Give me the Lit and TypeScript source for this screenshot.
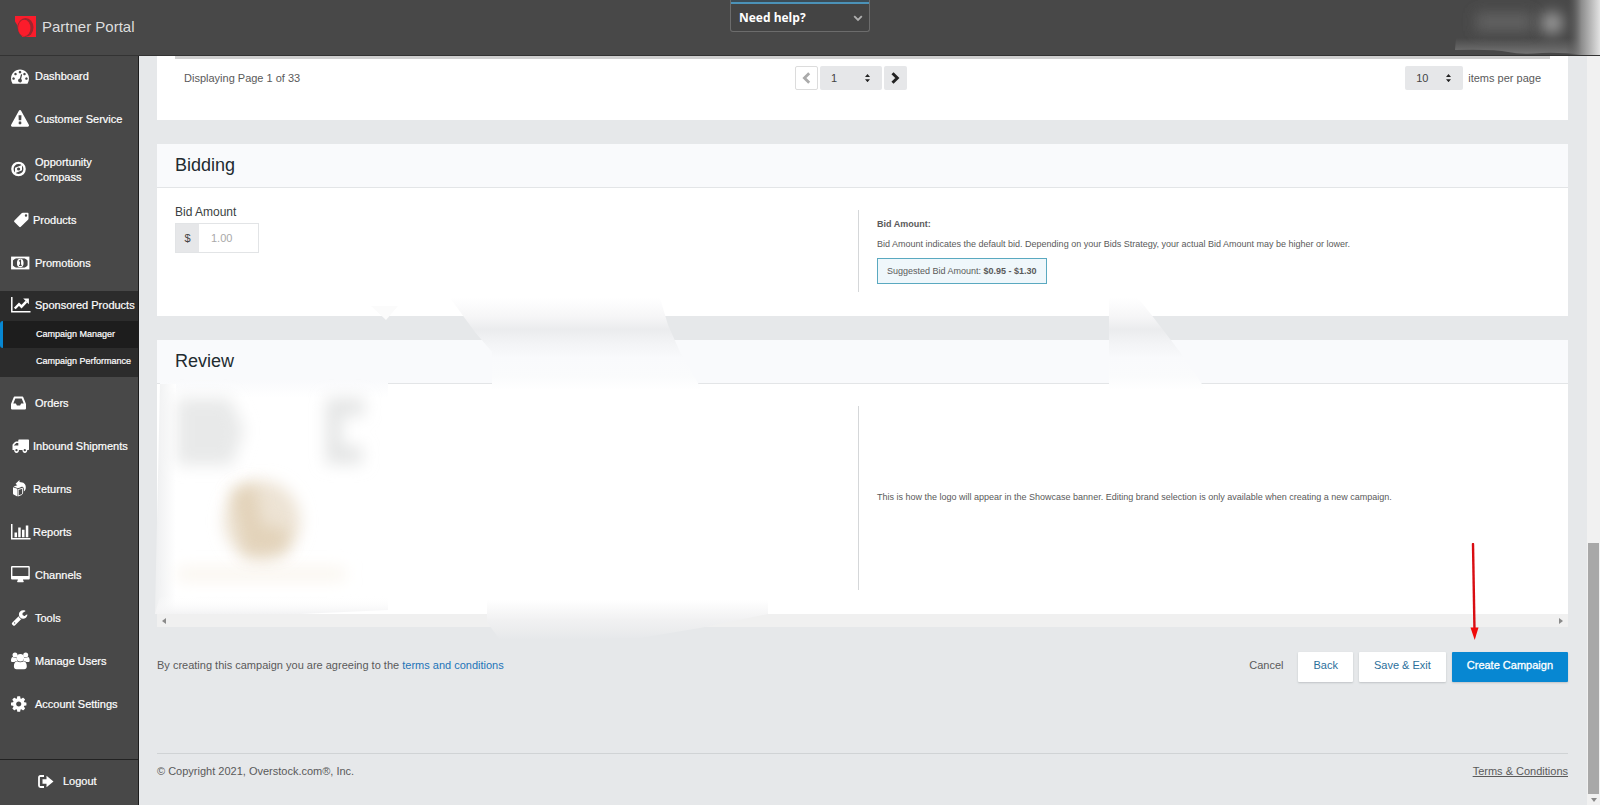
import { LitElement, html, svg, css, nothing } from "lit";
import { customElement, property } from "lit/decorators.js";
import { classMap } from "lit/directives/class-map.js";

const icons: Record<string, unknown> = {
  dashboard: svg`<svg width="18" height="18" viewBox="0 0 1792 1792" fill="currentColor"><path d="M384 1152q0-53-37.500-90.500t-90.500-37.500-90.500 37.500-37.500 90.500 37.500 90.500 90.500 37.500 90.500-37.500 37.500-90.500zm192-448q0-53-37.500-90.500t-90.500-37.500-90.500 37.500-37.500 90.500 37.500 90.500 90.500 37.500 90.500-37.500 37.500-90.500zm428 481l101-382q6-26-7.500-48.500t-38.500-29.500-48 6.500-30 39.500l-101 382q-60 5-107 43.500t-63 98.500q-20 77 20 146t117 89 146-20 89-117q16-60-6-117t-72-91zm660-33q0-53-37.500-90.500t-90.500-37.500-90.500 37.500-37.500 90.500 37.500 90.500 90.500 37.500 90.500-37.500 37.500-90.500zm-640-640q0-53-37.500-90.500t-90.500-37.500-90.500 37.500-37.500 90.500 37.500 90.500 90.500 37.500 90.500-37.500 37.500-90.500zm448 192q0-53-37.500-90.500t-90.500-37.500-90.500 37.500-37.500 90.500 37.500 90.500 90.500 37.500 90.500-37.500 37.500-90.500zm320 448q0 261-141 483-19 29-54 29h-1402q-35 0-54-29-141-221-141-483 0-182 71-348t191-286 286-191 348-71 348 71 286 191 191 286 71 348z"/></svg>`,
  warning: svg`<svg width="18" height="18" viewBox="0 0 1792 1792" fill="currentColor"><path d="M1024 1375v-190q0-14-9.500-23.500t-22.500-9.500h-192q-13 0-22.500 9.500t-9.500 23.500v190q0 14 9.500 23.500t22.500 9.500h192q13 0 22.500-9.500t9.500-23.500zm-2-374l18-459q0-12-10-19-13-11-24-11h-220q-11 0-24 11-10 7-10 21l17 457q0 10 10 16.500t24 6.500h185q14 0 23.500-6.500t10.500-16.500zm-14-934l768 1408q35 63-2 126-17 29-46.500 46t-63.500 17h-1536q-34 0-63.500-17t-46.500-46q-37-63-2-126l768-1408q17-31 47-49t65-18 65 18 47 49z"/></svg>`,
  compass: svg`<svg width="15" height="16" viewBox="0 0 15 16"><circle cx="7.500" cy="8" r="6.100" fill="none" stroke="currentColor" stroke-width="2.400"/><path fill="currentColor" fill-rule="evenodd" d="M11 3.900v5.400L4 12.200V6.800zM7.600 6.400a1.600 1.600 0 1 0 0 3.200 1.600 1.600 0 0 0 0-3.200z"/></svg>`,
  tag: svg`<svg width="19" height="16" viewBox="0 0 19 16" fill="currentColor"><path fill-rule="evenodd" d="M17.500 1.400v5.100c0 .5-.2.900-.5 1.200l-7.200 7.100c-.5.500-1.100.5-1.600 0L3.400 10c-.5-.5-.5-1.100 0-1.600l7.200-7.100c.3-.3.700-.5 1.200-.5h5c.4 0 .7.300.7.600zM15 2.300a1.200 1.200 0 1 0 0 2.400 1.200 1.200 0 0 0 0-2.400z"/></svg>`,
  money: svg`<svg width="19" height="14" viewBox="0 0 19 14"><rect x="1" y="1.500" width="16.500" height="11" fill="none" stroke="currentColor" stroke-width="1.800"/><path fill="currentColor" d="M1.500 2h3.500L1.500 4.800zM17 2h-3.500L17 4.800zM1.500 12h3.500L1.500 9.200zM17 12h-3.500L17 9.200z"/><ellipse cx="9.250" cy="7" rx="3.300" ry="4.300" fill="currentColor"/><path d="M8 5.300l1.500-1V9M8 9.400h2.700" fill="none" stroke="#484848" stroke-width="1.100"/></svg>`,
  line: svg`<svg width="20" height="16" viewBox="0 0 20 16"><path d="M.8 0v14.800H19.500" fill="none" stroke="currentColor" stroke-width="1.500"/><path d="M3.800 11.500l4.200-4.300 2.500 2.500 4.800-5" fill="none" stroke="currentColor" stroke-width="2.500"/><path fill="currentColor" d="M12.200 1.500h5.700v5.700z"/></svg>`,
  inbox: svg`<svg width="15" height="14" viewBox="0 0 15 14" fill="currentColor"><path fill-rule="evenodd" d="M2.600 1.400C2.800.8 3.100.6 3.600.6h7.800c.5 0 .8.200 1 .8L15 8v4.600c0 .5-.3.800-.8.800H.8c-.5 0-.8-.3-.8-.8V8zM4.300 2.500L2.300 7.600h2.600l1 2h3.200l1-2h2.600l-2-5.100z"/></svg>`,
  truck: svg`<svg width="19" height="16" viewBox="0 0 19 16" fill="currentColor"><path fill-rule="evenodd" d="M8 1.500h9.300c.4 0 .7.300.7.700v9c0 .6-.4.900-1 .9h-.8a2.400 2.400 0 1 1-4.700 0H7.900a2.400 2.400 0 1 1-4.700 0H1.500V7.200c0-.5.200-.9.500-1.200l2-2c.3-.3.700-.5 1.100-.5h2.200V2.200c0-.4.300-.7.700-.7zM5.300 4.900L3 7.200v.4h4.300V4.900zM5.500 11a1.100 1.100 0 1 0 0 2.300 1.100 1.100 0 0 0 0-2.300zM13.800 11a1.100 1.100 0 1 0 0 2.300 1.100 1.100 0 0 0 0-2.300z"/></svg>`,
  returns: svg`<svg width="17" height="17" viewBox="0 0 17 17" fill="currentColor"><path d="M2 7.300l4.400 1.500v7.600L3 14.800c-.7-.3-1-.7-1-1.400z"/><path d="M11.600 8.200v5c0 .6-.3 1-.8 1.300l-3.600 1.500V9.600z" fill="none" stroke="currentColor" stroke-width=".9"/><path d="M2.600 6.500L7 5l4.600 1.600-4.700 1.600z"/><path d="M8.500 0v2.100c4.200.1 6.300 2.100 6.300 5.100 0 2-.6 3.300-2 4.400 .6-3.500-.2-5.300-4.300-5.600v1.400L4.600 3.700z"/></svg>`,
  bars: svg`<svg width="20" height="16" viewBox="0 0 20 16" fill="currentColor"><path d="M0 0h1.500v14h18v1.500H0zM3.500 8.500h2.500v4.700H3.500zM7.200 3.500h2.500v9.700H7.200zM11 5.700h2.500v7.500H11zM14.800 1.500h2.500v11.700h-2.500z"/></svg>`,
  desktop: svg`<svg width="19" height="17" viewBox="0 0 19 17" fill="currentColor"><path fill-rule="evenodd" d="M1.400 0h16.100c.8 0 1.300.5 1.300 1.300v10.900c0 .8-.5 1.300-1.300 1.300H12c0 1.100.8 1.400.8 2.100 0 .4-.2.600-.6.600H6.700c-.4 0-.6-.2-.6-.6 0-.7.800-1 .8-2.100H1.400C.6 13.500 0 13 0 12.200V1.300C0 .5.600 0 1.400 0zm0 1.400v8.500h16V1.400z"/></svg>`,
  wrench: svg`<svg width="17" height="17" viewBox="0 0 1792 1792" fill="currentColor"><path d="M448 1472q0-26-19-45t-45-19-45 19-19 45 19 45 45 19 45-19 19-45zm644-420l-682 682q-37 37-90 37-52 0-91-37l-106-108q-38-36-38-90 0-53 38-91l681-681q39 98 114.500 173.500t173.500 114.500zm634-435q0 39-23 106-47 134-164.500 217.500t-258.500 83.500q-185 0-316.500-131.500t-131.500-316.500 131.500-316.500 316.500-131.500q58 0 121.500 16.500t107.500 46.500q16 11 16 28t-16 28l-293 169v224l193 107q5-3 79-48.500t135.500-81 70.500-35.500q15 0 23.500 10t8.500 25z"/></svg>`,
  users: svg`<svg width="19" height="18" viewBox="0 0 19 18" fill="currentColor"><circle cx="4" cy="2.900" r="2.500"/><circle cx="14.700" cy="2.900" r="2.500"/><path d="M1.500 5.100c1.500 1 3.300 1 4.300.4-.2 1.500.1 2.500.7 3.400-1.600 0-2.500.4-3.200 1.200H1.700C.5 10.100 0 9.600 0 8.700c0-1.600.4-3.100 1.500-3.600zM17.200 5.100c-1.500 1-3.300 1-4.300.4.200 1.500-.1 2.500-.7 3.400 1.600 0 2.500.4 3.200 1.200H17c1.200 0 1.700-.5 1.700-1.400 0-1.600-.4-3.100-1.500-3.600z"/><circle cx="9.350" cy="5.800" r="3.700"/><path d="M6 9.200c2.200 1.500 4.500 1.500 6.700 0 2.200.3 3.100 2.500 3.100 5.400 0 1.600-1 2.600-2.600 2.600H5.500c-1.600 0-2.600-1-2.600-2.600 0-2.900.9-5.100 3.100-5.400z"/></svg>`,
  cog: svg`<svg width="18" height="18" viewBox="128 0 1792 1792" fill="currentColor"><path d="M1152 896q0-106-75-181t-181-75-181 75-75 181 75 181 181 75 181-75 75-181zm512-109v222q0 12-8 23t-20 13l-185 28q-19 54-39 91 35 50 107 138 10 12 10 25t-9 23q-27 37-99 108t-94 71q-12 0-26-9l-138-108q-44 23-91 38-16 136-29 186-7 28-36 28h-222q-14 0-24.500-8.500t-11.500-21.500l-28-184q-49-16-90-37l-141 107q-10 9-25 9-14 0-25-11-126-114-165-168-7-10-7-23 0-12 8-23 15-21 51-66.500t54-70.500q-27-50-41-99l-183-27q-13-2-21-12.500t-8-23.500v-222q0-12 8-23t19-13l186-28q14-46 39-92-40-57-107-138-10-12-10-24 0-10 9-23 26-36 98.500-107.500t94.500-71.500q13 0 26 10l138 107q44-23 91-38 16-136 29-186 7-28 36-28h222q14 0 24.500 8.500t11.500 21.500l28 184q49 16 90 37l142-107q9-9 24-9 13 0 25 10 129 119 165 170 7 8 7 22 0 12-8 23-15 21-51 66.500t-54 70.500q26 50 41 98l183 28q13 2 21 12.500t8 23.500z"/></svg>`,
  logout: svg`<svg width="16" height="13" viewBox="0 0 16 13"><path d="M6 1H2.500C1.500 1 1 1.500 1 2.500v8c0 1 .5 1.500 1.500 1.500H6" fill="none" stroke="currentColor" stroke-width="1.800"/><path fill="currentColor" d="M4.500 4.300h4V.8L15.500 6.500l-7 5.700V8.700h-4z"/></svg>`,
};

interface NavItem {
  icon: string;
  label: string;
  tight?: boolean;
  children?: string[];
}

const navItems: NavItem[] = [
  { icon: "dashboard", label: "Dashboard" },
  { icon: "warning", label: "Customer Service" },
  { icon: "compass", label: "Opportunity Compass" },
  { icon: "tag", label: "Products", tight: true },
  { icon: "money", label: "Promotions" },
  { icon: "line", label: "Sponsored Products", children: ["Campaign Manager", "Campaign Performance"] },
  { icon: "inbox", label: "Orders" },
  { icon: "truck", label: "Inbound Shipments", tight: true },
  { icon: "returns", label: "Returns", tight: true },
  { icon: "bars", label: "Reports", tight: true },
  { icon: "desktop", label: "Channels" },
  { icon: "wrench", label: "Tools" },
  { icon: "users", label: "Manage Users" },
  { icon: "cog", label: "Account Settings" },
];

@customElement("portal-header")
export class PortalHeader extends LitElement {
  static styles = css`
    :host {
      display: grid;
      grid-template-columns: 1fr auto 1fr;
      height: 55px;
      background: #484848;
      box-shadow: 0 1px 0 #333;
      position: relative;
      z-index: 2;
    }
    .brand {
      display: flex;
      align-items: center;
      gap: 6px;
      padding: 0 0 3px 15px;
      color: #dedede;
      font-size: 15px;
      line-height: 20px;
      text-decoration: none;
    }
    .brand span {
      padding-top: 2px;
    }
    .help {
      box-sizing: border-box;
      width: 140px;
      height: 32px;
      display: flex;
      align-items: center;
      justify-content: space-between;
      padding: 5px 6px 0 8px;
      background: #444;
      border: 1px solid #6c6c6c;
      border-top: 0;
      border-radius: 0 0 3px 3px;
      box-shadow: inset 0 2px 0 #3c4c56, inset 0 4px 0 #4b92b8;
      color: #fff;
      font: bold 12px/16px "Open Sans", sans-serif;
    }
    .account {
      position: absolute;
      top: 0;
      right: 0;
    }
  `;
  render() {
    return html`
      <a class="brand" href="#">
        <svg width="21" height="21" viewBox="0 0 21 21" aria-hidden="true">
          <path fill="#fb1c2b" d="M0 0h21v21H0z" />
          <path fill="#484848" d="M0 5.500L2.500 9.500c.3 4.500 2 8.500 5 11.500H0z" />
          <ellipse cx="10.500" cy="11.500" rx="8" ry="9.500" fill="#9c262e" />
          <ellipse cx="9.300" cy="12" rx="6.200" ry="8.200" fill="#fb1c2b" />
        </svg>
        <span>Partner Portal</span>
      </a>
      <button class="help" type="button">
        <span>Need help?</span>
        <svg width="10" height="7" viewBox="0 0 10 7" aria-hidden="true">
          <path d="M1.200 1.200L5 5l3.800-3.800" fill="none" stroke="#b0b0b0" stroke-width="1.800" />
        </svg>
      </button>
      <svg class="account" width="180" height="55" viewBox="0 0 180 55" aria-hidden="true">
        <defs>
          <linearGradient id="edge">
            <stop offset="0" stop-color="#484848" stop-opacity="0" />
            <stop offset=".45" stop-color="#8c8c8c" />
            <stop offset="1" stop-color="#e2e2e2" />
          </linearGradient>
          <linearGradient id="slab" x1="0" y1="0" x2="0" y2="1">
            <stop offset="0" stop-color="#777" stop-opacity="0" />
            <stop offset="1" stop-color="#777" />
          </linearGradient>
          <filter id="soft" x="-50%" y="-80%" width="200%" height="260%">
            <feGaussianBlur stdDeviation="7" />
          </filter>
        </defs>
        <rect x="56" y="13" width="56" height="18" fill="#626262" filter="url(#soft)" />
        <circle cx="132" cy="23" r="11" fill="#9a9a9a" filter="url(#soft)" />
        <path d="M36 38H167V55q-30-3-45-2-20 2-34-1T35 50z" fill="url(#slab)" />
        <rect x="146" width="34" height="55" fill="url(#edge)" />
      </svg>
    `;
  }
}

@customElement("portal-nav")
export class PortalNav extends LitElement {
  static styles = css`
    :host {
      display: flex;
      flex-direction: column;
      box-sizing: border-box;
      background: #484848;
      border-right: 1px solid #1c1c1c;
      color: #fff;
      font-size: 11px;
      line-height: 15px;
      -webkit-text-stroke: 0.2px #fff;
    }
    a {
      color: inherit;
      text-decoration: none;
    }
    .item {
      display: grid;
      grid-template-columns: 24px 1fr;
      align-items: center;
      padding: 14px 0 14px 11px;
    }
    .item.tight {
      grid-template-columns: 22px 1fr;
    }
    .item svg {
      display: block;
      margin: -3px 0 -1px;
    }
    .item.wrap {
      padding-right: 32px;
    }
    .group {
      margin: 6px 0 5px;
      padding-bottom: 2px;
      background: #2c2c2c;
    }
    .group .item {
      padding-top: 7px;
      padding-bottom: 8px;
      white-space: nowrap;
    }
    .sub {
      display: block;
      padding-left: 36px;
      font-size: 9px;
      line-height: 27px;
      white-space: nowrap;
    }
    .sub.active {
      background: #1d1d1d;
      border-left: 3px solid #0787d2;
      padding-left: 33px;
      border-radius: 3px 0 0 3px;
    }
    .logout {
      display: flex;
      align-items: center;
      gap: 9px;
      margin-top: auto;
      padding: 14px 0 16px 38px;
      border-top: 1px solid #222;
    }
  `;
  private link(item: NavItem) {
    const cls = { item: true, tight: !!item.tight, wrap: item.icon === "compass" };
    return html`<a class=${classMap(cls)} href="#">${icons[item.icon]}<span>${item.label}</span></a>`;
  }
  render() {
    return html`
      ${navItems.map((item) =>
        item.children
          ? html`<div class="group">
              ${this.link(item)}
              ${item.children.map(
                (label, i) => html`<a class=${classMap({ sub: true, active: i === 0 })} href="#">${label}</a>`
              )}
            </div>`
          : this.link(item)
      )}
      <a class="logout" href="#">${icons.logout}<span>Logout</span></a>
    `;
  }
}

@customElement("stepper-select")
export class StepperSelect extends LitElement {
  @property() value = "";
  @property() label = "";
  static styles = css`
    :host {
      display: inline-grid;
      align-items: center;
      height: 24px;
    }
    select,
    svg {
      grid-area: 1 / 1;
    }
    select {
      appearance: none;
      width: 100%;
      height: 100%;
      padding: 0 11px;
      border: 0;
      border-radius: 2px;
      background: #e6e7e9;
      color: #444;
      font: inherit;
    }
    svg {
      justify-self: end;
      margin-right: 12px;
      pointer-events: none;
    }
  `;
  render() {
    return html`
      <select aria-label=${this.label}>
        <option>${this.value}</option>
      </select>
      <svg width="5" height="8" viewBox="0 0 5 8" aria-hidden="true">
        <path d="M0 3l2.500-3L5 3zM0 5.200h5L2.500 8.200z" fill="#222" />
      </svg>
    `;
  }
}

@customElement("panel-card")
export class PanelCard extends LitElement {
  @property() heading = "";
  static styles = css`
    :host {
      display: block;
      margin-top: 24px;
      background: #fff;
    }
    h2 {
      margin: 0;
      padding: 9px 18px 10px;
      background: #f9fafc;
      border-bottom: 1px solid #e3e5e7;
      color: #222b30;
      font-size: 18px;
      font-weight: 400;
      line-height: 24px;
    }
  `;
  render() {
    return html`${this.heading ? html`<h2>${this.heading}</h2>` : nothing}<slot></slot>`;
  }
}

@customElement("app-root")
export class AppRoot extends LitElement {
  static styles = css`
    :host {
      display: flex;
      flex-direction: column;
      height: 100vh;
      overflow: hidden;
      background: #e6e8ea;
      color: #5a5a5a;
      font-family: "Liberation Sans", Arial, sans-serif;
      font-size: 11px;
      line-height: 16px;
    }
    .body {
      display: grid;
      grid-template-columns: 139px 1fr 13px;
      flex: 1;
      min-height: 0;
    }
    .main {
      position: relative;
      padding: 0 19px 0 18px;
    }
    .pager {
      display: grid;
      grid-template-columns: 1fr auto 1fr;
      align-items: center;
      margin: 0 18px;
      padding: 7px 9px 30px;
      border-top: 4px solid #cfcfcf;
    }
    .first {
      margin-top: 0;
    }
    .pages {
      display: flex;
      gap: 2px;
      margin-right: 23px;
    }
    .pages stepper-select {
      width: 62px;
    }
    .per {
      display: flex;
      justify-content: flex-end;
      align-items: center;
      gap: 5px;
    }
    .per stepper-select {
      width: 58px;
    }
    .step {
      display: grid;
      place-items: center;
      width: 23px;
      height: 24px;
      padding: 0;
      border: 0;
      border-radius: 2px;
      background: #e6e7e9;
      color: #222;
    }
    .step:disabled {
      background: #fff;
      border: 1px solid #dcdcdc;
      color: #aaa;
    }
    .columns {
      display: grid;
      grid-template-columns: 1fr 1fr;
      padding: 16px 27px 24px 18px;
    }
    .note {
      margin-top: 6px;
      padding: 6px 0 8px 18px;
      border-left: 1px solid #d5d7d9;
      font-size: 9px;
    }
    .note p {
      margin: 0 0 4px;
    }
    .hint {
      display: inline-block;
      margin: 2px 0 0;
      padding: 4px 9px;
      border: 1px solid #5aa9c0;
      background: #eff7fb;
    }
    .preview {
      display: flex;
      align-items: center;
      height: 170px;
    }
    .label {
      display: block;
      color: #3a3f42;
      font-size: 12px;
      margin-bottom: 3px;
    }
    .money {
      display: flex;
      width: 84px;
      height: 30px;
      box-sizing: border-box;
      border: 1px solid #e2e4e6;
    }
    .sign {
      width: 23px;
      background: #e6e7e9;
      line-height: 28px;
      text-align: center;
      color: #444;
    }
    .money input {
      flex: 1;
      min-width: 0;
      padding: 0 12px;
      border: 0;
      background: #fff;
      font: inherit;
    }
    .money input::placeholder {
      color: #a9a9a9;
    }
    .hbar {
      display: flex;
      justify-content: space-between;
      align-items: center;
      height: 13px;
      padding: 0 5px;
      background: #f0f0f0;
    }
    .actions {
      display: flex;
      align-items: center;
      gap: 6px;
      padding-top: 25px;
    }
    .terms {
      margin: 0 auto 4px 0;
    }
    .terms a {
      color: #1d74b8;
      text-decoration: none;
    }
    .btn {
      height: 30px;
      padding: 0 15px 4px;
      border: 0;
      border-radius: 1px;
      background: #fff;
      box-shadow: 0 1px 2px #bfc3c6;
      color: #2b6f9b;
      font: inherit;
    }
    .plain {
      background: none;
      box-shadow: none;
      color: #5a5a5a;
      padding: 0 9px 4px;
    }
    .primary {
      background: #0787d2;
      color: #fff;
      -webkit-text-stroke: 0.3px #fff;
    }
    .target {
      position: relative;
    }
    .pointer {
      position: absolute;
      left: 16px;
      bottom: 42px;
    }
    .footer {
      display: flex;
      justify-content: space-between;
      margin-top: 71px;
      padding-top: 9px;
      border-top: 1px solid #d0d3d5;
    }
    .footer a {
      color: #5a5a5a;
    }
    .smudges {
      position: absolute;
      left: 0;
      top: 0;
      pointer-events: none;
    }
    .vbar {
      display: flex;
      flex-direction: column;
      align-items: center;
      background: #f1f1f1;
    }
    .above {
      flex: 487;
    }
    .thumb {
      flex: 251;
      width: 11px;
      background: #a8a8a8;
    }
    .down {
      margin: 4px 0 3px;
    }
  `;

  private smudges() {
    return svg`<svg class="smudges" width="1200" height="600" viewBox="139 55 1200 600" aria-hidden="true">
      <defs>
        <linearGradient id="gap" gradientUnits="userSpaceOnUse" x1="0" y1="298" x2="0" y2="390">
          <stop offset="0" stop-color="#fff"/>
          <stop offset=".2" stop-color="#f6f6f7"/>
          <stop offset=".34" stop-color="#ebecee"/>
          <stop offset=".5" stop-color="#f3f4f6"/>
          <stop offset=".65" stop-color="#f9fafc"/>
          <stop offset=".85" stop-color="#fafbfc"/>
          <stop offset="1" stop-color="#fff"/>
        </linearGradient>
        <linearGradient id="low" gradientUnits="userSpaceOnUse" x1="0" y1="600" x2="0" y2="640">
          <stop offset="0" stop-color="#fff"/>
          <stop offset=".5" stop-color="#f1f1f2"/>
          <stop offset="1" stop-color="#e6e8ea"/>
        </linearGradient>
        <linearGradient id="side">
          <stop offset="0" stop-color="#eeeff0"/>
          <stop offset="1" stop-color="#fff"/>
        </linearGradient>
        <linearGradient id="top" x1="0" y1="0" x2="0" y2="1">
          <stop offset="0" stop-color="#f9fafc"/>
          <stop offset="1" stop-color="#fff"/>
        </linearGradient>
        <linearGradient id="base" x1="0" y1="0" x2="0" y2="1">
          <stop offset="0" stop-color="#fff" stop-opacity="0"/>
          <stop offset="1" stop-color="#f3f3f4"/>
        </linearGradient>
        <filter id="b8" x="-60%" y="-60%" width="220%" height="220%"><feGaussianBlur stdDeviation="8"/></filter>
      </defs>
      <path d="M450 298H660L668 325 680 352 702 390H492V352L475 332z" fill="url(#gap)"/>
      <path d="M1109 298H1138L1150 313 1180 352 1206 390H1109z" fill="url(#gap)"/>
      <path d="M371 306H398L386 320z" fill="#fbfbfb"/>
      <path d="M487 600H768V614L700 628 640 638 500 640 487 622z" fill="url(#low)"/>
      <path d="M160 380H388V612H156z" fill="#fff"/>
      <path d="M160 380H388V398H160z" fill="url(#top)"/>
      <path d="M160 384H176V614H155z" fill="url(#side)"/>
      <path d="M160 596H388V610L300 614H155z" fill="url(#base)"/>
      <g filter="url(#b8)">
        <path d="M177 398H230L244 430 232 465H177z" fill="#e8e9e9"/>
        <path d="M326 398H364V416H342V446H362V464H326z" fill="#e4e5e5"/>
        <path d="M178 568H345V580H178z" fill="#f9f4ec"/>
      </g>
      <ellipse cx="262" cy="521" rx="38" ry="40" fill="#ede3d4" filter="url(#b8)"/>
      <path d="M230 490L255 482 262 525 290 530 285 552 245 555z" fill="#dcc8a8" opacity=".6" filter="url(#b8)"/>
    </svg>`;
  }

  render() {
    return html`
      <portal-header></portal-header>
      <div class="body">
        <portal-nav></portal-nav>
        <main class="main">
          <panel-card class="first">
            <div class="pager">
              <span>Displaying Page 1 of 33</span>
              <div class="pages">
                <button class="step" type="button" disabled aria-label="Previous page">
                  <svg width="9" height="12" viewBox="0 0 9 12"><path d="M7.200 1.200L2.400 6l4.800 4.800" fill="none" stroke="currentColor" stroke-width="2.800" /></svg>
                </button>
                <stepper-select value="1" label="Page"></stepper-select>
                <button class="step" type="button" aria-label="Next page">
                  <svg width="9" height="12" viewBox="0 0 9 12"><path d="M1.500 1.200L6.300 6l-4.800 4.800" fill="none" stroke="currentColor" stroke-width="3" /></svg>
                </button>
              </div>
              <div class="per">
                <stepper-select value="10" label="Items per page"></stepper-select>
                <span>items per page</span>
              </div>
            </div>
          </panel-card>

          <panel-card heading="Bidding">
            <div class="columns">
              <div>
                <label class="label" for="bid">Bid Amount</label>
                <div class="money">
                  <span class="sign">$</span>
                  <input id="bid" type="text" placeholder="1.00" />
                </div>
              </div>
              <div class="note">
                <p><b>Bid Amount:</b></p>
                <p>Bid Amount indicates the default bid. Depending on your Bids Strategy, your actual Bid Amount may be higher or lower.</p>
                <div class="hint">Suggested Bid Amount: <b>$0.95 - $1.30</b></div>
              </div>
            </div>
          </panel-card>

          <panel-card heading="Review">
            <div class="columns">
              <div></div>
              <div class="note">
                <div class="preview">This is how the logo will appear in the Showcase banner. Editing brand selection is only available when creating a new campaign.</div>
              </div>
            </div>
            <div class="hbar">
              <svg width="4" height="6" viewBox="0 0 4 6"><path d="M4 0v6L0 3z" fill="#8a8a8a" /></svg>
              <svg width="4" height="6" viewBox="0 0 4 6"><path d="M0 0v6l4-3z" fill="#8a8a8a" /></svg>
            </div>
          </panel-card>

          <div class="actions">
            <p class="terms">By creating this campaign you are agreeing to the <a href="#">terms and conditions</a></p>
            <button class="btn plain" type="button">Cancel</button>
            <button class="btn" type="button">Back</button>
            <button class="btn" type="button">Save &amp; Exit</button>
            <div class="target">
              <button class="btn primary" type="button">Create Campaign</button>
              <svg class="pointer" width="12" height="97" viewBox="0 0 12 97" aria-hidden="true">
                <path d="M5 1L6.500 88" stroke="#d90d12" stroke-width="2.400" stroke-linecap="round" />
                <path d="M2.500 84.500h8L6.700 97z" fill="#f00a0a" />
              </svg>
            </div>
          </div>

          <footer class="footer">
            <span>© Copyright 2021, Overstock.com®, Inc.</span>
            <a href="#">Terms &amp; Conditions</a>
          </footer>
          ${this.smudges()}
        </main>
        <div class="vbar">
          <div class="above"></div>
          <div class="thumb"></div>
          <svg class="down" width="6" height="4" viewBox="0 0 6 4"><path d="M0 0h6L3 4z" fill="#8a8a8a" /></svg>
        </div>
      </div>
    `;
  }
}
